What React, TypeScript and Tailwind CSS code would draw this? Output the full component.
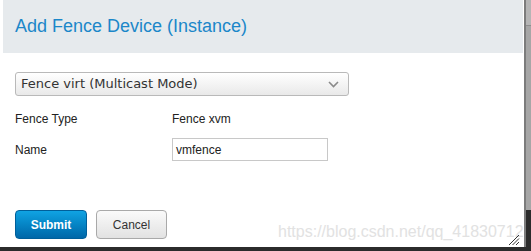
export default function App() {
    return (
        <div className="relative flex h-[251px] w-[531px] flex-col overflow-hidden bg-[#2b2b2b] font-['Liberation_Sans',Arial,sans-serif]">
            <div className="flex h-[247px]">
                <div className="flex w-[524px] flex-col bg-white pl-[3px] pr-[1px]">
                    <div className="flex h-[53px] items-center bg-[#e6eaed] pl-[12px] pb-[1px]">
                        <h1 className="text-[18px] leading-none text-[#1b87c9]">Add Fence Device (Instance)</h1>
                    </div>

                    <div className="pl-[12px] pt-[19px]">
                        <div className="flex h-[24px] w-[334px] items-center justify-between rounded-[3px] border border-[#b9b9b9] bg-gradient-to-b from-white to-[#e9e9e9] pl-[5px] pr-[9px] font-['DejaVu_Sans',sans-serif] text-[13px] text-[#333]">
                            <span>Fence virt (Multicast Mode)</span>
                            <svg width="11" height="7" viewBox="0 0 11 7" fill="none">
                                <path d="M1 1l4.5 4.5L10 1" stroke="#8a8a8a" strokeWidth="1.6" />
                            </svg>
                        </div>

                        <div className="mt-[15px] flex h-[16px] items-center text-[12px] text-[#222]">
                            <span className="w-[157px]">Fence Type</span>
                            <span>Fence xvm</span>
                        </div>

                        <div className="mt-[11px] flex items-center text-[12px] text-[#222]">
                            <span className="w-[157px]">Name</span>
                            <div className="flex h-[23px] w-[156px] items-center border border-[#c8c8c8] pl-[3px] text-[#222]">
                                vmfence
                            </div>
                        </div>

                        <div className="mt-[49px] flex gap-[9px]">
                            <button className="h-[29px] w-[72px] rounded-[4px] border border-[#005f9a] bg-gradient-to-b from-[#10a3e3] to-[#0067a8] text-[12px] font-bold text-white">
                                Submit
                            </button>
                            <button className="h-[29px] w-[71px] rounded-[4px] border border-[#a9a9a9] bg-gradient-to-b from-[#fafafa] to-[#e2e2e2] text-[12px] text-[#333]">
                                Cancel
                            </button>
                        </div>
                    </div>
                </div>
                <div className="w-[2px] bg-[#7c7c7c]" />
                <div className="flex w-[5px] flex-col">
                    <div className="h-[25px] bg-[#b5b5b5]" />
                    <div className="h-[1px] bg-[#8d8d8d]" />
                    <div className="h-[184px] bg-[#a6a6a6]" />
                    <div className="flex-1 bg-[#2b2b2b]" />
                </div>
            </div>

            <span className="pointer-events-none absolute left-[278px] top-[224px] text-[16px] leading-none text-[#e2e2e2]">
                https://blog.csdn.net/qq_41830712
            </span>
            <svg className="absolute left-[508px] top-[234px]" width="12" height="12" viewBox="0 0 12 12">
                <path d="M11 1L1 11M11 4.5L4.5 11M11 8L8 11" stroke="#333" strokeWidth="1" />
            </svg>
        </div>
    );
}
